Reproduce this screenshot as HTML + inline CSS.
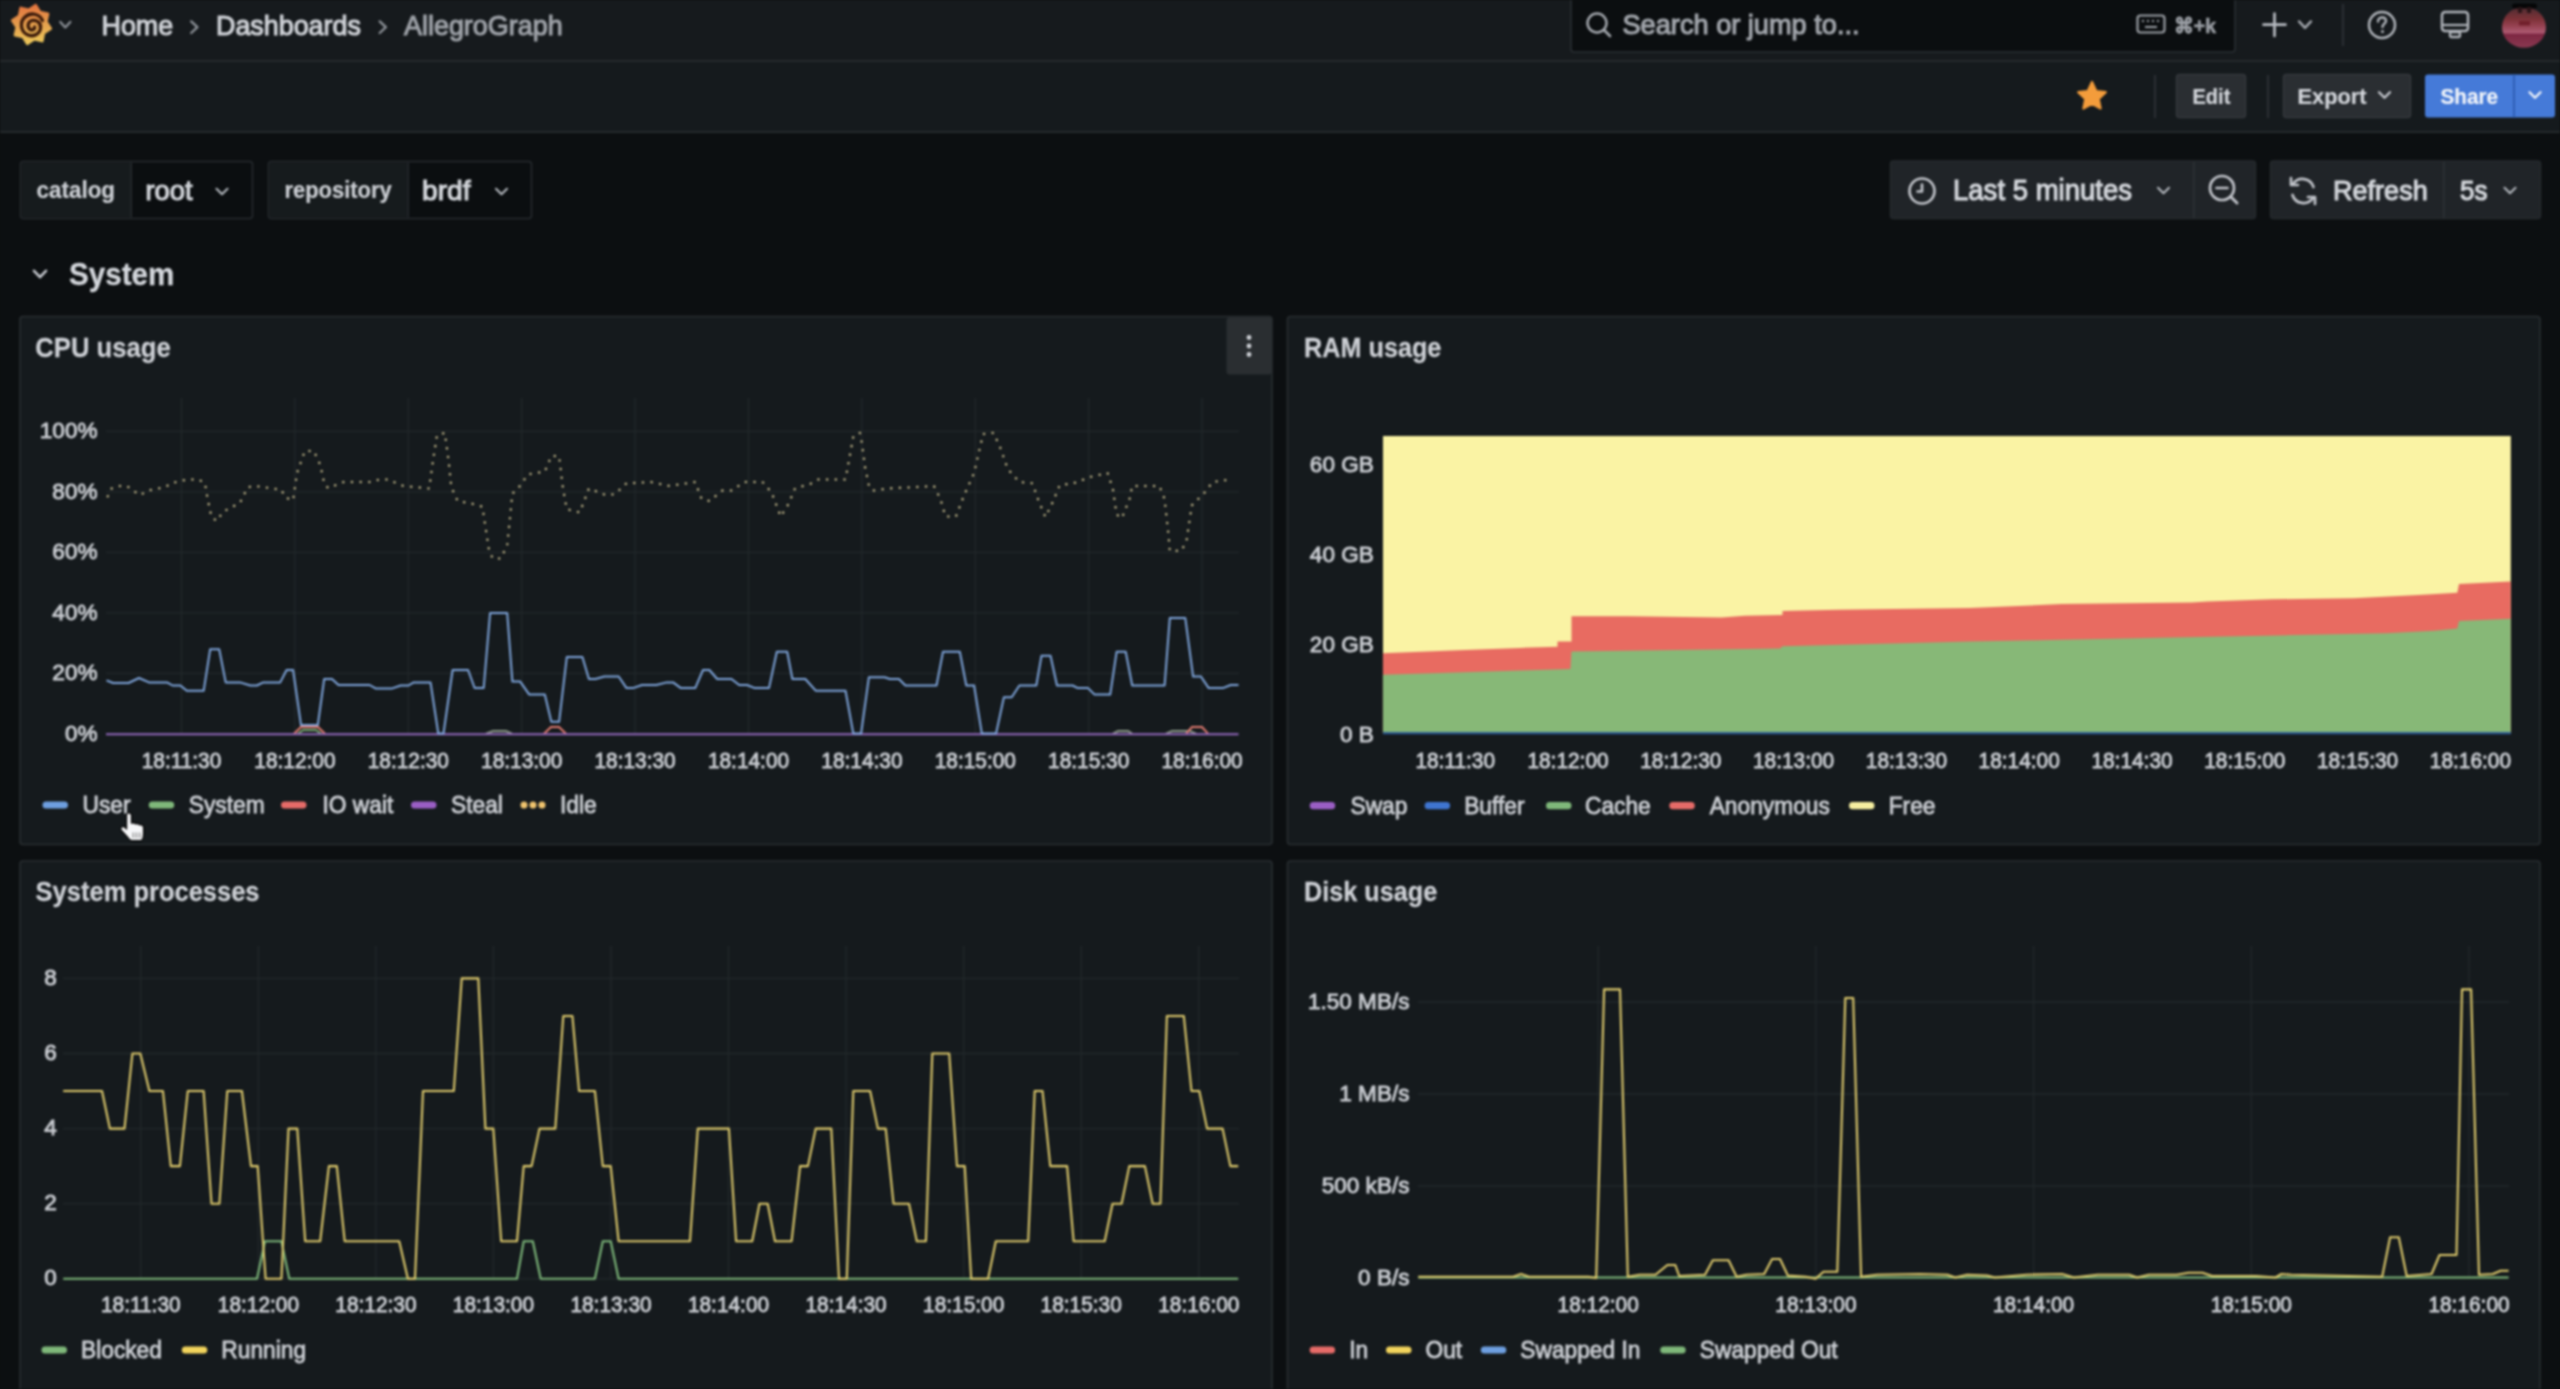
<!DOCTYPE html>
<html><head><meta charset="utf-8">
<style>
html,body{margin:0;padding:0;background:#0c0f11;}
body{width:2560px;height:1389px;overflow:hidden;position:relative;}
svg{position:absolute;left:0;top:0;display:block;filter:blur(0.9px);}
text{font-family:"Liberation Sans", sans-serif;}
</style></head>
<body>
<svg width="2560" height="1389" viewBox="0 0 2560 1389">
<rect x="0" y="0" width="2560" height="1389" fill="#0c0f11"/>
<rect x="0" y="0" width="2560" height="60" fill="#161a1d"/>
<rect x="0" y="60" width="2560" height="2" fill="#252a2d"/>
<rect x="0" y="62" width="2560" height="69" fill="#151a1d"/>
<rect x="0" y="131" width="2560" height="2" fill="#252a2d"/>
<g transform="translate(8.5 1.5)">
 <defs><linearGradient id="lg" x1="0.25" y1="0" x2="0.55" y2="1"><stop offset="0" stop-color="#e4703e"/><stop offset="0.5" stop-color="#e49c4c"/><stop offset="1" stop-color="#ecc85a"/></linearGradient></defs>
 <path d="M23.0,3.5 L28.7,9.3 L36.8,9.2 L36.7,17.3 L42.5,23.0 L36.7,28.7 L36.8,36.8 L28.7,36.7 L23.0,42.5 L17.3,36.7 L9.2,36.8 L9.3,28.7 L3.5,23.0 L9.3,17.3 L9.2,9.2 L17.3,9.3 Z" fill="url(#lg)" stroke="url(#lg)" stroke-width="3" stroke-linejoin="round" transform="rotate(12 23 23)"/>
 <path d="M34,19 C31,12 22,10.5 16.5,15.5 C11,20.5 12,29.5 18.5,33 C24,36 31,33 32,27 C33,21.5 28,18 23.5,19 C19.5,20 18.5,25 21,27.5 C23,29.5 26.5,28 26,25.5" fill="none" stroke="#3b1a0a" stroke-width="3.3" stroke-linecap="round"/>
</g>
<path d="M60.3,21.9 L65.3,27.4 L70.3,21.9" fill="none" stroke="#8a8f95" stroke-width="2.3" stroke-linecap="round" stroke-linejoin="round"/>
<text transform="translate(101.5 34.8) scale(0.96 1)" font-size="28" fill="#cdd0d5" text-anchor="start" font-weight="normal" stroke="#cdd0d5" stroke-width="1.15">Home</text>
<path d="M191.2,21.4 L197.4,27.2 L191.2,33.0" fill="none" stroke="#8e9399" stroke-width="2.3" stroke-linecap="round" stroke-linejoin="round"/>
<text transform="translate(216.0 34.8) scale(0.96 1)" font-size="28" fill="#cdd0d5" text-anchor="start" font-weight="normal" stroke="#cdd0d5" stroke-width="1.15">Dashboards</text>
<path d="M379.7,21.4 L385.9,27.2 L379.7,33.0" fill="none" stroke="#8e9399" stroke-width="2.3" stroke-linecap="round" stroke-linejoin="round"/>
<text transform="translate(404.0 34.6) scale(0.945 1)" font-size="28.5" fill="#9da1a7" text-anchor="start" font-weight="normal" stroke="#9da1a7" stroke-width="1.15">AllegroGraph</text>
<rect x="1571" y="-6" width="664" height="58" rx="3" fill="#0b0e10" stroke="#2a2f33" stroke-width="1.6"/>
<g transform="translate(1584 10)"><circle cx="13" cy="13" r="9.5" fill="none" stroke="#a3a7ad" stroke-width="2.5"/><path d="M20,20 L26,26" stroke="#a3a7ad" stroke-width="2.7" stroke-linecap="round"/></g>
<text transform="translate(1622.5 34.2) scale(0.985 1)" font-size="27.6" fill="#a0a4aa" text-anchor="start" font-weight="normal" stroke="#a0a4aa" stroke-width="1.15">Search or jump to...</text>
<g transform="translate(2136 14)"><rect x="1.5" y="1.5" width="27" height="17" rx="3" fill="none" stroke="#9a9ea4" stroke-width="2.2"/><path d="M6,7 h2 M11,7 h2 M16,7 h2 M21,7 h2 M9,13 h12" stroke="#9a9ea4" stroke-width="2"/></g>
<text transform="translate(2174.0 33.0) scale(0.95 1)" font-size="21" fill="#9a9ea4" text-anchor="start" font-weight="bold" stroke="#9a9ea4" stroke-width="0.5">&#8984;+k</text>
<path d="M2274.5,13.5 V36 M2263.5,24.7 H2285.5" stroke="#b7bbc1" stroke-width="2.7" stroke-linecap="round"/>
<path d="M2299.0,21.4 L2305.0,27.9 L2311.0,21.4" fill="none" stroke="#a3a7ad" stroke-width="2.4" stroke-linecap="round" stroke-linejoin="round"/>
<rect x="2342" y="4" width="2" height="42" rx="0" fill="#2b2f34"/>
<g transform="translate(2366 9)"><circle cx="16" cy="16" r="13" fill="none" stroke="#b1b5bb" stroke-width="2.5"/><path d="M12,12.5 C12,9.5 14,8.5 16,8.5 C18.5,8.5 20,10 20,12 C20,14.5 16.5,15 16.5,18" fill="none" stroke="#b1b5bb" stroke-width="2.4" stroke-linecap="round"/><circle cx="16.5" cy="22.5" r="1.5" fill="#b1b5bb"/></g>
<g transform="translate(2439 9)"><rect x="3" y="3" width="26" height="19" rx="3" fill="none" stroke="#b1b5bb" stroke-width="2.5"/><path d="M3,16 H29" stroke="#b1b5bb" stroke-width="2.2"/><rect x="11" y="23" width="10" height="5" rx="1.5" fill="none" stroke="#b1b5bb" stroke-width="2.3"/></g>
<defs><clipPath id="av"><ellipse cx="2524" cy="27.3" rx="22" ry="20.5"/></clipPath><linearGradient id="avg" x1="0" y1="0" x2="0" y2="1"><stop offset="0" stop-color="#4a2c31"/><stop offset="0.3" stop-color="#7c3238"/><stop offset="0.45" stop-color="#94404f"/><stop offset="0.62" stop-color="#ad5a72"/><stop offset="0.66" stop-color="#7d2742"/><stop offset="1" stop-color="#8a3a52"/></linearGradient></defs><g clip-path="url(#av)"><rect x="2500" y="6" width="48" height="43" fill="url(#avg)"/><rect x="2519" y="21" width="11" height="4.5" fill="#72202c"/></g><rect x="2512" y="3.5" width="25" height="5" rx="2.5" fill="#050607"/><rect x="2518" y="7" width="4" height="6" fill="#2a1518"/><rect x="2527" y="7" width="4" height="6" fill="#2a1518"/>
<path d="M2092,82 L2096.2,91 L2105.8,92.2 L2098.7,98.9 L2100.6,108.5 L2092,103.8 L2083.4,108.5 L2085.3,98.9 L2078.2,92.2 L2087.8,91 Z" fill="#f39c3b" stroke="#f39c3b" stroke-width="2.2" stroke-linejoin="round"/>
<rect x="2154" y="75" width="2" height="43" rx="0" fill="#2b2f34"/>
<rect x="2176.5" y="74.5" width="69" height="43" rx="3" fill="#2a2e32" stroke="#34383d" stroke-width="1.5"/>
<text transform="translate(2192.5 103.8) scale(0.92 1)" font-size="21.8" fill="#d3d6db" text-anchor="start" font-weight="bold" stroke="#d3d6db" stroke-width="0.2">Edit</text>
<rect x="2267" y="75" width="2" height="43" rx="0" fill="#2b2f34"/>
<rect x="2283.5" y="74.5" width="127" height="43" rx="3" fill="#2a2e32" stroke="#34383d" stroke-width="1.5"/>
<text transform="translate(2297.5 103.8) scale(1.0 1)" font-size="21.8" fill="#d3d6db" text-anchor="start" font-weight="bold" stroke="#d3d6db" stroke-width="0.2">Export</text>
<path d="M2379.0,92.2 L2384.5,97.8 L2390.0,92.2" fill="none" stroke="#c7cad0" stroke-width="2.3" stroke-linecap="round" stroke-linejoin="round"/>
<rect x="2425" y="74.5" width="130" height="43" rx="3" fill="#457ad8"/>
<rect x="2513" y="74.5" width="2" height="43" rx="0" fill="#2f5fb5"/>
<text transform="translate(2440.5 103.8) scale(0.95 1)" font-size="21.8" fill="#f2f5fa" text-anchor="start" font-weight="bold" stroke="#f2f5fa" stroke-width="0.2">Share</text>
<path d="M2529.5,92.2 L2535.0,97.8 L2540.5,92.2" fill="none" stroke="#f2f5fa" stroke-width="2.3" stroke-linecap="round" stroke-linejoin="round"/>
<rect x="20.5" y="161.5" width="232" height="57" rx="3" fill="#0b0e10" stroke="#272b2f" stroke-width="1.5"/>
<rect x="21.5" y="162.5" width="109.5" height="55" fill="#161b1d"/>
<rect x="130.5" y="162.5" width="1.5" height="55" fill="#272b2f"/>
<text transform="translate(36.5 198.3) scale(0.955 1)" font-size="23.5" fill="#cdd0d5" text-anchor="start" font-weight="bold" stroke="#cdd0d5" stroke-width="0.2">catalog</text>
<text transform="translate(145.5 200.0) scale(0.96 1)" font-size="28.5" fill="#d3d6db" text-anchor="start" font-weight="normal" stroke="#d3d6db" stroke-width="1.15">root</text>
<path d="M216.5,188.8 L222.0,194.2 L227.5,188.8" fill="none" stroke="#b0b4ba" stroke-width="2.2" stroke-linecap="round" stroke-linejoin="round"/>
<rect x="268.5" y="161.5" width="263" height="57" rx="3" fill="#0b0e10" stroke="#272b2f" stroke-width="1.5"/>
<rect x="269.5" y="162.5" width="138" height="55" fill="#161b1d"/>
<rect x="407.5" y="162.5" width="1.5" height="55" fill="#272b2f"/>
<text transform="translate(284.5 198.3) scale(0.945 1)" font-size="23.2" fill="#cdd0d5" text-anchor="start" font-weight="bold" stroke="#cdd0d5" stroke-width="0.2">repository</text>
<text transform="translate(422.0 200.0) scale(0.99 1)" font-size="28.5" fill="#d3d6db" text-anchor="start" font-weight="normal" stroke="#d3d6db" stroke-width="1.15">brdf</text>
<path d="M496.0,188.8 L501.5,194.2 L507.0,188.8" fill="none" stroke="#b0b4ba" stroke-width="2.2" stroke-linecap="round" stroke-linejoin="round"/>
<rect x="1890.5" y="161" width="365" height="57.5" rx="3" fill="#202428" stroke="#262a2e" stroke-width="1.5"/>
<rect x="2193" y="162" width="1.5" height="56" fill="#2d3236"/>
<g transform="translate(1906 175)"><circle cx="16" cy="16" r="12.5" fill="none" stroke="#c0c3c9" stroke-width="2.7"/><path d="M16,9.5 V16.5 H11.5" fill="none" stroke="#c0c3c9" stroke-width="2.7" stroke-linecap="round" stroke-linejoin="round"/></g>
<text transform="translate(1953.0 199.7) scale(0.95 1)" font-size="29" fill="#d3d6db" text-anchor="start" font-weight="normal" stroke="#d3d6db" stroke-width="1.15">Last 5 minutes</text>
<path d="M2158.0,187.8 L2163.5,193.2 L2169.0,187.8" fill="none" stroke="#b0b4ba" stroke-width="2.2" stroke-linecap="round" stroke-linejoin="round"/>
<g transform="translate(2206 173)"><circle cx="16" cy="15" r="12" fill="none" stroke="#c0c3c9" stroke-width="2.7"/><path d="M10.5,15 H21.5" stroke="#c0c3c9" stroke-width="2.7" stroke-linecap="round"/><path d="M24.5,23.5 L31,30" stroke="#c0c3c9" stroke-width="2.9" stroke-linecap="round"/></g>
<rect x="2270.5" y="161" width="270" height="57.5" rx="3" fill="#202428" stroke="#262a2e" stroke-width="1.5"/>
<rect x="2443" y="162" width="1.5" height="56" fill="#2d3236"/>
<g transform="translate(2286 174)"><path d="M27.5,13 A11.5,11.5 0 0 0 7,10" fill="none" stroke="#c0c3c9" stroke-width="2.7" stroke-linecap="round"/><path d="M6.5,21 A11.5,11.5 0 0 0 27,24" fill="none" stroke="#c0c3c9" stroke-width="2.7" stroke-linecap="round"/><path d="M5,4 V11 H12" fill="none" stroke="#c0c3c9" stroke-width="2.7" stroke-linecap="round" stroke-linejoin="round"/><path d="M29,30 V23 H22" fill="none" stroke="#c0c3c9" stroke-width="2.7" stroke-linecap="round" stroke-linejoin="round"/></g>
<text transform="translate(2333.0 199.7) scale(0.95 1)" font-size="28.5" fill="#d3d6db" text-anchor="start" font-weight="normal" stroke="#d3d6db" stroke-width="1.15">Refresh</text>
<text transform="translate(2460.0 199.7) scale(0.93 1)" font-size="28" fill="#d3d6db" text-anchor="start" font-weight="normal" stroke="#d3d6db" stroke-width="1.15">5s</text>
<path d="M2504.5,187.8 L2510.0,193.2 L2515.5,187.8" fill="none" stroke="#b0b4ba" stroke-width="2.2" stroke-linecap="round" stroke-linejoin="round"/>
<path d="M34.0,270.8 L40.0,277.2 L46.0,270.8" fill="none" stroke="#c5c8ce" stroke-width="2.6" stroke-linecap="round" stroke-linejoin="round"/>
<text transform="translate(69.0 284.5) scale(0.955 1)" font-size="31" fill="#d3d6db" text-anchor="start" font-weight="bold" stroke="#d3d6db" stroke-width="0.3">System</text>
<rect x="20" y="316.5" width="1252" height="528.0" rx="3" fill="#151a1d" stroke="#292e31" stroke-width="1.6"/>
<rect x="1287.5" y="316.5" width="1252.5" height="528.0" rx="3" fill="#151a1d" stroke="#292e31" stroke-width="1.6"/>
<rect x="20" y="861" width="1252" height="534" rx="3" fill="#151a1d" stroke="#292e31" stroke-width="1.6"/>
<rect x="1287.5" y="861" width="1252.5" height="534" rx="3" fill="#151a1d" stroke="#292e31" stroke-width="1.6"/>
<text transform="translate(35.3 356.8) scale(0.95 1)" font-size="27" fill="#cdd0d5" text-anchor="start" font-weight="bold" stroke="#cdd0d5" stroke-width="0.25">CPU usage</text>
<text transform="translate(1304.0 356.5) scale(0.935 1)" font-size="27" fill="#cdd0d5" text-anchor="start" font-weight="bold" stroke="#cdd0d5" stroke-width="0.25">RAM usage</text>
<text transform="translate(35.6 900.5) scale(0.945 1)" font-size="27" fill="#cdd0d5" text-anchor="start" font-weight="bold" stroke="#cdd0d5" stroke-width="0.25">System processes</text>
<text transform="translate(1304.0 900.5) scale(0.935 1)" font-size="27" fill="#cdd0d5" text-anchor="start" font-weight="bold" stroke="#cdd0d5" stroke-width="0.25">Disk usage</text>
<rect x="1226.5" y="317.5" width="45" height="57" rx="3" fill="#2a2e31"/>
<circle cx="1249" cy="337.5" r="2.4" fill="#cfd2d7"/>
<circle cx="1249" cy="346" r="2.4" fill="#cfd2d7"/>
<circle cx="1249" cy="354.5" r="2.4" fill="#cfd2d7"/>
<line x1="106" y1="733.8" x2="1239" y2="733.8" stroke="#22282b" stroke-width="1.3"/>
<line x1="106" y1="673.3" x2="1239" y2="673.3" stroke="#22282b" stroke-width="1.3"/>
<line x1="106" y1="612.8" x2="1239" y2="612.8" stroke="#22282b" stroke-width="1.3"/>
<line x1="106" y1="552.3" x2="1239" y2="552.3" stroke="#22282b" stroke-width="1.3"/>
<line x1="106" y1="491.8" x2="1239" y2="491.8" stroke="#22282b" stroke-width="1.3"/>
<line x1="106" y1="431.3" x2="1239" y2="431.3" stroke="#22282b" stroke-width="1.3"/>
<line x1="181.5" y1="398" x2="181.5" y2="734" stroke="#22282b" stroke-width="1.3"/>
<line x1="294.9" y1="398" x2="294.9" y2="734" stroke="#22282b" stroke-width="1.3"/>
<line x1="408.3" y1="398" x2="408.3" y2="734" stroke="#22282b" stroke-width="1.3"/>
<line x1="521.7" y1="398" x2="521.7" y2="734" stroke="#22282b" stroke-width="1.3"/>
<line x1="635.1" y1="398" x2="635.1" y2="734" stroke="#22282b" stroke-width="1.3"/>
<line x1="748.5" y1="398" x2="748.5" y2="734" stroke="#22282b" stroke-width="1.3"/>
<line x1="861.9" y1="398" x2="861.9" y2="734" stroke="#22282b" stroke-width="1.3"/>
<line x1="975.3" y1="398" x2="975.3" y2="734" stroke="#22282b" stroke-width="1.3"/>
<line x1="1088.7" y1="398" x2="1088.7" y2="734" stroke="#22282b" stroke-width="1.3"/>
<line x1="1202.1" y1="398" x2="1202.1" y2="734" stroke="#22282b" stroke-width="1.3"/>
<text transform="translate(97.5 740.5) scale(0.99 1)" font-size="22.8" fill="#c9ccd1" text-anchor="end" font-weight="normal" stroke="#c9ccd1" stroke-width="0.9">0%</text>
<text transform="translate(97.5 680.1) scale(0.99 1)" font-size="22.8" fill="#c9ccd1" text-anchor="end" font-weight="normal" stroke="#c9ccd1" stroke-width="0.9">20%</text>
<text transform="translate(97.5 619.6) scale(0.99 1)" font-size="22.8" fill="#c9ccd1" text-anchor="end" font-weight="normal" stroke="#c9ccd1" stroke-width="0.9">40%</text>
<text transform="translate(97.5 559.1) scale(0.99 1)" font-size="22.8" fill="#c9ccd1" text-anchor="end" font-weight="normal" stroke="#c9ccd1" stroke-width="0.9">60%</text>
<text transform="translate(97.5 498.6) scale(0.99 1)" font-size="22.8" fill="#c9ccd1" text-anchor="end" font-weight="normal" stroke="#c9ccd1" stroke-width="0.9">80%</text>
<text transform="translate(97.5 438.1) scale(0.99 1)" font-size="22.8" fill="#c9ccd1" text-anchor="end" font-weight="normal" stroke="#c9ccd1" stroke-width="0.9">100%</text>
<text transform="translate(181.5 767.6) scale(0.94 1)" font-size="22.2" fill="#c9ccd1" text-anchor="middle" font-weight="normal" stroke="#c9ccd1" stroke-width="0.9">18:11:30</text>
<text transform="translate(294.9 767.6) scale(0.94 1)" font-size="22.2" fill="#c9ccd1" text-anchor="middle" font-weight="normal" stroke="#c9ccd1" stroke-width="0.9">18:12:00</text>
<text transform="translate(408.3 767.6) scale(0.94 1)" font-size="22.2" fill="#c9ccd1" text-anchor="middle" font-weight="normal" stroke="#c9ccd1" stroke-width="0.9">18:12:30</text>
<text transform="translate(521.7 767.6) scale(0.94 1)" font-size="22.2" fill="#c9ccd1" text-anchor="middle" font-weight="normal" stroke="#c9ccd1" stroke-width="0.9">18:13:00</text>
<text transform="translate(635.1 767.6) scale(0.94 1)" font-size="22.2" fill="#c9ccd1" text-anchor="middle" font-weight="normal" stroke="#c9ccd1" stroke-width="0.9">18:13:30</text>
<text transform="translate(748.5 767.6) scale(0.94 1)" font-size="22.2" fill="#c9ccd1" text-anchor="middle" font-weight="normal" stroke="#c9ccd1" stroke-width="0.9">18:14:00</text>
<text transform="translate(861.9 767.6) scale(0.94 1)" font-size="22.2" fill="#c9ccd1" text-anchor="middle" font-weight="normal" stroke="#c9ccd1" stroke-width="0.9">18:14:30</text>
<text transform="translate(975.3 767.6) scale(0.94 1)" font-size="22.2" fill="#c9ccd1" text-anchor="middle" font-weight="normal" stroke="#c9ccd1" stroke-width="0.9">18:15:00</text>
<text transform="translate(1088.7 767.6) scale(0.94 1)" font-size="22.2" fill="#c9ccd1" text-anchor="middle" font-weight="normal" stroke="#c9ccd1" stroke-width="0.9">18:15:30</text>
<text transform="translate(1202.1 767.6) scale(0.94 1)" font-size="22.2" fill="#c9ccd1" text-anchor="middle" font-weight="normal" stroke="#c9ccd1" stroke-width="0.9">18:16:00</text>
<path d="M294,733.7 L301,727 L318,727 L325,733.7" fill="none" stroke="#e07a70" stroke-width="2.0"/>
<path d="M298,733.7 L303,730 L316,730 L321,733.7" fill="none" stroke="#7aa874" stroke-width="2"/>
<path d="M486,733.7 L493,731 L506,731 L512,733.7" fill="none" stroke="#8a9788" stroke-width="2.0"/>
<path d="M544,733.7 L551,727 L559,727 L566,733.7" fill="none" stroke="#e07a70" stroke-width="2.0"/>
<path d="M1113,733.7 L1118,731 L1128,731 L1132,733.7" fill="none" stroke="#8a9788" stroke-width="2.0"/>
<path d="M1166,733.7 L1172,731 L1190,731 L1196,733.7" fill="none" stroke="#8a9788" stroke-width="2.0"/>
<path d="M1186,733.7 L1192,727 L1202,727 L1208,733.7" fill="none" stroke="#e07a70" stroke-width="2.0"/>
<line x1="106" y1="734.2" x2="1238.5" y2="734.2" stroke="#9266bb" stroke-width="1.9"/>
<polyline points="107.8,496.3 111.7,488.5 118.0,486.0 127.0,486.0 133.7,491.0 140.2,495.0 148.0,490.6 164.8,487.2 172.6,482.8 188.0,479.4 198.5,479.4 205.0,483.3 207.6,498.9 211.5,517.0 216.7,521.0 223.0,511.8 240.0,502.8 247.8,487.2 255.5,486.0 281.5,489.8 285.4,497.6 293.1,500.2 297.0,473.0 304.8,451.0 313.9,451.0 320.4,465.2 324.2,483.3 328.1,488.0 343.7,482.0 369.6,482.0 380.0,479.4 387.8,479.4 403.3,486.0 429.2,488.5 433.1,460.0 437.0,435.4 444.8,432.8 448.7,461.3 451.3,487.2 457.7,501.0 473.3,504.0 482.4,506.7 488.9,549.4 492.7,558.5 500.7,558.5 507.2,545.5 512.4,493.7 518.9,487.2 528.0,474.3 544.8,471.7 551.3,456.1 559.1,456.1 563.0,488.5 566.8,509.2 579.8,512.4 588.9,488.5 605.7,495.0 614.8,494.2 626.5,483.3 651.1,482.0 669.2,485.9 695.2,482.0 701.6,498.9 709.4,501.0 722.4,490.6 731.5,490.6 744.4,482.0 762.6,482.0 771.6,492.4 780.7,516.5 788.5,504.0 795.0,488.5 811.8,483.3 818.3,479.4 845.5,479.4 853.3,436.7 859.8,432.8 861.3,439.3 865.2,467.8 869.0,486.0 873.0,490.6 888.5,488.5 933.9,486.0 940.4,498.9 945.5,516.5 955.9,516.5 963.7,496.3 974.1,473.0 983.1,434.0 993.5,432.8 1000.0,447.0 1007.8,469.0 1019.4,482.0 1032.4,483.3 1038.9,501.5 1045.4,517.0 1053.1,501.5 1059.6,485.4 1075.2,482.8 1090.7,476.8 1107.6,473.0 1112.8,488.5 1116.6,514.4 1121.8,518.3 1129.6,498.9 1132.2,486.0 1159.4,486.0 1164.6,498.9 1168.5,535.2 1169.8,550.7 1181.5,550.7 1186.6,540.4 1191.8,505.4 1204.8,492.4 1212.6,482.0 1230.7,479.4" fill="none" stroke="#bdb388" stroke-width="2.5" stroke-dasharray="0.1 8.6" stroke-linecap="round" stroke-linejoin="round"/>
<polyline points="106.5,680.3 113.0,683.0 128.5,683.0 139.0,678.0 149.0,682.4 167.0,682.4 172.6,685.5 180.4,685.5 186.8,690.7 203.7,690.7 210.2,649.2 219.2,649.2 225.7,682.4 240.0,682.4 250.4,685.5 256.8,685.5 263.3,682.4 280.2,682.4 286.6,670.0 293.1,670.0 301.0,725.0 317.8,725.0 324.2,679.0 332.0,679.0 338.5,685.0 369.6,685.0 376.0,688.6 391.6,688.6 400.7,685.5 408.5,685.5 413.7,682.4 430.5,682.4 438.3,733.5 443.5,733.5 452.6,670.0 468.1,670.0 474.6,688.0 483.7,688.0 490.1,613.0 507.2,613.0 512.4,681.6 520.2,681.6 529.3,694.6 544.8,694.6 551.3,721.8 559.1,721.8 566.8,657.0 582.4,657.0 588.9,679.0 595.4,679.0 604.4,676.5 618.7,676.5 626.5,688.1 633.0,688.1 642.0,685.0 656.3,685.0 666.6,682.4 673.1,682.4 680.9,688.1 695.2,688.1 703.0,670.0 709.4,670.0 717.2,679.0 731.5,679.0 739.2,685.0 747.0,685.0 754.8,688.1 769.0,688.1 776.8,651.8 787.2,651.8 792.4,679.0 805.3,679.0 815.7,690.7 845.5,690.7 853.3,733.5 861.1,733.5 868.9,677.2 884.6,677.2 889.8,679.0 898.9,679.0 905.4,685.5 936.5,685.5 943.0,651.8 959.8,651.8 966.3,685.5 974.1,685.5 981.8,733.5 996.1,733.5 1003.9,697.2 1011.7,697.2 1019.4,685.5 1036.3,685.5 1041.5,655.7 1050.5,655.7 1057.0,685.5 1072.6,685.5 1077.8,688.1 1088.1,688.1 1094.6,694.6 1110.2,694.6 1116.6,651.8 1125.7,651.8 1132.2,685.5 1164.6,685.5 1169.8,618.1 1185.3,618.1 1193.1,676.5 1200.9,676.5 1208.7,688.1 1222.9,688.1 1230.7,685.0 1238.5,685.0" fill="none" stroke="#7fa5db" stroke-width="2.0" stroke-linejoin="round"/>
<rect x="42.5" y="801.4" width="25.5" height="7.2" rx="3.6" fill="#6e9fe0"/>
<text transform="translate(82.5 813.2) scale(0.925 1)" font-size="24.6" fill="#c9ccd1" text-anchor="start" font-weight="normal" stroke="#c9ccd1" stroke-width="0.9">User</text>
<rect x="148.75" y="801.4" width="25.5" height="7.2" rx="3.6" fill="#7fb87a"/>
<text transform="translate(188.8 813.2) scale(0.925 1)" font-size="24.6" fill="#c9ccd1" text-anchor="start" font-weight="normal" stroke="#c9ccd1" stroke-width="0.9">System</text>
<rect x="281" y="801.4" width="25.5" height="7.2" rx="3.6" fill="#e66b68"/>
<text transform="translate(322.5 813.2) scale(0.925 1)" font-size="24.6" fill="#c9ccd1" text-anchor="start" font-weight="normal" stroke="#c9ccd1" stroke-width="0.9">IO wait</text>
<rect x="411" y="801.4" width="25.5" height="7.2" rx="3.6" fill="#9a5ec4"/>
<text transform="translate(451.0 813.2) scale(0.925 1)" font-size="24.6" fill="#c9ccd1" text-anchor="start" font-weight="normal" stroke="#c9ccd1" stroke-width="0.9">Steal</text>
<circle cx="524" cy="805" r="3.5" fill="#f0c46e"/>
<circle cx="533" cy="805" r="3.5" fill="#f0c46e"/>
<circle cx="542" cy="805" r="3.5" fill="#f0c46e"/>
<text transform="translate(560.0 813.2) scale(0.925 1)" font-size="24.6" fill="#c9ccd1" text-anchor="start" font-weight="normal" stroke="#c9ccd1" stroke-width="0.9">Idle</text>
<rect x="1383" y="436" width="1127.8" height="297.5" fill="#faf3a4"/>
<polygon points="1382.9,653.3 1459.0,650.2 1520.0,647.9 1557.5,646.7 1557.5,641.6 1571.5,641.6 1571.5,616.2 1627.8,616.2 1721.5,617.4 1745.0,615.8 1782.5,615.1 1782.5,611.1 1838.7,609.7 1970.0,608.0 2062.0,604.1 2191.6,602.5 2207.8,601.5 2272.6,599.3 2353.6,598.3 2418.5,595.0 2457.3,592.8 2459.0,584.0 2510.8,581.5 2510.8,733.5 1382.9,733.5" fill="#e86b61"/>
<polygon points="1382.9,674.8 1570.4,669.0 1571.5,651.4 1780.0,648.6 1782.5,646.2 1970.0,641.6 2062.0,639.8 2224.0,636.5 2386.0,633.3 2434.6,630.7 2457.3,628.4 2459.0,621.0 2510.8,618.7 2510.8,733.5 1382.9,733.5" fill="#87b877"/>
<line x1="1383" y1="733.2" x2="2510.8" y2="733.2" stroke="#2c5a90" stroke-width="2.2"/>
<text transform="translate(1373.8 741.5) scale(0.99 1)" font-size="22.8" fill="#c9ccd1" text-anchor="end" font-weight="normal" stroke="#c9ccd1" stroke-width="0.9">0 B</text>
<text transform="translate(1373.8 651.8) scale(0.99 1)" font-size="22.8" fill="#c9ccd1" text-anchor="end" font-weight="normal" stroke="#c9ccd1" stroke-width="0.9">20 GB</text>
<text transform="translate(1373.8 562.1) scale(0.99 1)" font-size="22.8" fill="#c9ccd1" text-anchor="end" font-weight="normal" stroke="#c9ccd1" stroke-width="0.9">40 GB</text>
<text transform="translate(1373.8 472.4) scale(0.99 1)" font-size="22.8" fill="#c9ccd1" text-anchor="end" font-weight="normal" stroke="#c9ccd1" stroke-width="0.9">60 GB</text>
<text transform="translate(1455.2 767.6) scale(0.94 1)" font-size="22.2" fill="#c9ccd1" text-anchor="middle" font-weight="normal" stroke="#c9ccd1" stroke-width="0.9">18:11:30</text>
<text transform="translate(1568.0 767.6) scale(0.94 1)" font-size="22.2" fill="#c9ccd1" text-anchor="middle" font-weight="normal" stroke="#c9ccd1" stroke-width="0.9">18:12:00</text>
<text transform="translate(1680.8 767.6) scale(0.94 1)" font-size="22.2" fill="#c9ccd1" text-anchor="middle" font-weight="normal" stroke="#c9ccd1" stroke-width="0.9">18:12:30</text>
<text transform="translate(1793.6 767.6) scale(0.94 1)" font-size="22.2" fill="#c9ccd1" text-anchor="middle" font-weight="normal" stroke="#c9ccd1" stroke-width="0.9">18:13:00</text>
<text transform="translate(1906.4 767.6) scale(0.94 1)" font-size="22.2" fill="#c9ccd1" text-anchor="middle" font-weight="normal" stroke="#c9ccd1" stroke-width="0.9">18:13:30</text>
<text transform="translate(2019.2 767.6) scale(0.94 1)" font-size="22.2" fill="#c9ccd1" text-anchor="middle" font-weight="normal" stroke="#c9ccd1" stroke-width="0.9">18:14:00</text>
<text transform="translate(2132.0 767.6) scale(0.94 1)" font-size="22.2" fill="#c9ccd1" text-anchor="middle" font-weight="normal" stroke="#c9ccd1" stroke-width="0.9">18:14:30</text>
<text transform="translate(2244.8 767.6) scale(0.94 1)" font-size="22.2" fill="#c9ccd1" text-anchor="middle" font-weight="normal" stroke="#c9ccd1" stroke-width="0.9">18:15:00</text>
<text transform="translate(2357.6 767.6) scale(0.94 1)" font-size="22.2" fill="#c9ccd1" text-anchor="middle" font-weight="normal" stroke="#c9ccd1" stroke-width="0.9">18:15:30</text>
<text transform="translate(2470.4 767.6) scale(0.94 1)" font-size="22.2" fill="#c9ccd1" text-anchor="middle" font-weight="normal" stroke="#c9ccd1" stroke-width="0.9">18:16:00</text>
<rect x="1309.7" y="802.1" width="25.5" height="7.2" rx="3.6" fill="#9a5ec4"/>
<text transform="translate(1350.5 813.9) scale(0.925 1)" font-size="24.6" fill="#c9ccd1" text-anchor="start" font-weight="normal" stroke="#c9ccd1" stroke-width="0.9">Swap</text>
<rect x="1424.6" y="802.1" width="25.5" height="7.2" rx="3.6" fill="#3f75d0"/>
<text transform="translate(1464.2 813.9) scale(0.925 1)" font-size="24.6" fill="#c9ccd1" text-anchor="start" font-weight="normal" stroke="#c9ccd1" stroke-width="0.9">Buffer</text>
<rect x="1546" y="802.1" width="25.5" height="7.2" rx="3.6" fill="#7fb87a"/>
<text transform="translate(1585.0 813.9) scale(0.925 1)" font-size="24.6" fill="#c9ccd1" text-anchor="start" font-weight="normal" stroke="#c9ccd1" stroke-width="0.9">Cache</text>
<rect x="1669.3" y="802.1" width="25.5" height="7.2" rx="3.6" fill="#e66b68"/>
<text transform="translate(1709.7 813.9) scale(0.925 1)" font-size="24.6" fill="#c9ccd1" text-anchor="start" font-weight="normal" stroke="#c9ccd1" stroke-width="0.9">Anonymous</text>
<rect x="1849" y="802.1" width="25.5" height="7.2" rx="3.6" fill="#f5eea0"/>
<text transform="translate(1888.7 813.9) scale(0.925 1)" font-size="24.6" fill="#c9ccd1" text-anchor="start" font-weight="normal" stroke="#c9ccd1" stroke-width="0.9">Free</text>
<line x1="63" y1="1278.8" x2="1239" y2="1278.8" stroke="#22282b" stroke-width="1.3"/>
<line x1="63" y1="1203.7" x2="1239" y2="1203.7" stroke="#22282b" stroke-width="1.3"/>
<line x1="63" y1="1128.6" x2="1239" y2="1128.6" stroke="#22282b" stroke-width="1.3"/>
<line x1="63" y1="1053.5" x2="1239" y2="1053.5" stroke="#22282b" stroke-width="1.3"/>
<line x1="63" y1="978.4" x2="1239" y2="978.4" stroke="#22282b" stroke-width="1.3"/>
<line x1="140.8" y1="946" x2="140.8" y2="1279" stroke="#22282b" stroke-width="1.3"/>
<line x1="258.4" y1="946" x2="258.4" y2="1279" stroke="#22282b" stroke-width="1.3"/>
<line x1="375.9" y1="946" x2="375.9" y2="1279" stroke="#22282b" stroke-width="1.3"/>
<line x1="493.4" y1="946" x2="493.4" y2="1279" stroke="#22282b" stroke-width="1.3"/>
<line x1="611.0" y1="946" x2="611.0" y2="1279" stroke="#22282b" stroke-width="1.3"/>
<line x1="728.5" y1="946" x2="728.5" y2="1279" stroke="#22282b" stroke-width="1.3"/>
<line x1="846.1" y1="946" x2="846.1" y2="1279" stroke="#22282b" stroke-width="1.3"/>
<line x1="963.7" y1="946" x2="963.7" y2="1279" stroke="#22282b" stroke-width="1.3"/>
<line x1="1081.2" y1="946" x2="1081.2" y2="1279" stroke="#22282b" stroke-width="1.3"/>
<line x1="1198.8" y1="946" x2="1198.8" y2="1279" stroke="#22282b" stroke-width="1.3"/>
<text transform="translate(56.8 1285.4) scale(0.99 1)" font-size="22.8" fill="#c9ccd1" text-anchor="end" font-weight="normal" stroke="#c9ccd1" stroke-width="0.9">0</text>
<text transform="translate(56.8 1210.3) scale(0.99 1)" font-size="22.8" fill="#c9ccd1" text-anchor="end" font-weight="normal" stroke="#c9ccd1" stroke-width="0.9">2</text>
<text transform="translate(56.8 1135.2) scale(0.99 1)" font-size="22.8" fill="#c9ccd1" text-anchor="end" font-weight="normal" stroke="#c9ccd1" stroke-width="0.9">4</text>
<text transform="translate(56.8 1060.1) scale(0.99 1)" font-size="22.8" fill="#c9ccd1" text-anchor="end" font-weight="normal" stroke="#c9ccd1" stroke-width="0.9">6</text>
<text transform="translate(56.8 985.0) scale(0.99 1)" font-size="22.8" fill="#c9ccd1" text-anchor="end" font-weight="normal" stroke="#c9ccd1" stroke-width="0.9">8</text>
<text transform="translate(140.8 1312.3) scale(0.94 1)" font-size="22.2" fill="#c9ccd1" text-anchor="middle" font-weight="normal" stroke="#c9ccd1" stroke-width="0.9">18:11:30</text>
<text transform="translate(258.4 1312.3) scale(0.94 1)" font-size="22.2" fill="#c9ccd1" text-anchor="middle" font-weight="normal" stroke="#c9ccd1" stroke-width="0.9">18:12:00</text>
<text transform="translate(375.9 1312.3) scale(0.94 1)" font-size="22.2" fill="#c9ccd1" text-anchor="middle" font-weight="normal" stroke="#c9ccd1" stroke-width="0.9">18:12:30</text>
<text transform="translate(493.4 1312.3) scale(0.94 1)" font-size="22.2" fill="#c9ccd1" text-anchor="middle" font-weight="normal" stroke="#c9ccd1" stroke-width="0.9">18:13:00</text>
<text transform="translate(611.0 1312.3) scale(0.94 1)" font-size="22.2" fill="#c9ccd1" text-anchor="middle" font-weight="normal" stroke="#c9ccd1" stroke-width="0.9">18:13:30</text>
<text transform="translate(728.5 1312.3) scale(0.94 1)" font-size="22.2" fill="#c9ccd1" text-anchor="middle" font-weight="normal" stroke="#c9ccd1" stroke-width="0.9">18:14:00</text>
<text transform="translate(846.1 1312.3) scale(0.94 1)" font-size="22.2" fill="#c9ccd1" text-anchor="middle" font-weight="normal" stroke="#c9ccd1" stroke-width="0.9">18:14:30</text>
<text transform="translate(963.7 1312.3) scale(0.94 1)" font-size="22.2" fill="#c9ccd1" text-anchor="middle" font-weight="normal" stroke="#c9ccd1" stroke-width="0.9">18:15:00</text>
<text transform="translate(1081.2 1312.3) scale(0.94 1)" font-size="22.2" fill="#c9ccd1" text-anchor="middle" font-weight="normal" stroke="#c9ccd1" stroke-width="0.9">18:15:30</text>
<text transform="translate(1198.8 1312.3) scale(0.94 1)" font-size="22.2" fill="#c9ccd1" text-anchor="middle" font-weight="normal" stroke="#c9ccd1" stroke-width="0.9">18:16:00</text>
<polyline points="63.2,1278.8 257.0,1278.8 265.0,1241.2 281.4,1241.2 289.3,1278.8 517.0,1278.8 523.7,1241.2 532.8,1241.2 540.7,1278.8 594.9,1278.8 602.8,1241.2 610.7,1241.2 618.6,1278.8 1238.2,1278.8" fill="none" stroke="#7db77a" stroke-width="2.1" stroke-linejoin="round"/>
<polyline points="63.2,1091.0 102.0,1091.0 109.9,1128.6 124.5,1128.6 132.4,1053.5 140.3,1053.5 149.4,1091.0 162.9,1091.0 170.8,1166.1 179.9,1166.1 187.8,1091.0 203.6,1091.0 211.5,1203.7 219.4,1203.7 227.3,1091.0 241.9,1091.0 251.0,1166.1 257.7,1166.1 265.6,1278.8 281.4,1278.8 288.5,1128.6 297.3,1128.6 305.2,1241.2 320.2,1241.2 328.9,1166.1 336.8,1166.1 344.7,1241.2 399.2,1241.2 407.9,1278.8 415.0,1278.8 423.0,1091.0 453.8,1091.0 461.7,978.4 478.3,978.4 485.4,1128.6 493.3,1128.6 501.2,1241.2 517.0,1241.2 523.7,1166.1 531.6,1166.1 539.5,1128.6 555.3,1128.6 563.3,1016.0 572.4,1016.0 579.1,1091.0 594.9,1091.0 602.8,1166.1 610.7,1166.1 618.6,1241.2 690.0,1241.2 697.8,1128.6 728.9,1128.6 736.1,1241.2 752.2,1241.2 759.5,1203.7 767.7,1203.7 775.0,1241.2 791.6,1241.2 800.1,1166.1 807.9,1166.1 815.7,1128.6 831.3,1128.6 839.0,1278.8 846.8,1278.8 853.3,1091.0 870.1,1091.0 877.9,1128.6 885.7,1128.6 893.5,1203.7 909.0,1203.7 916.8,1241.2 925.9,1241.2 932.3,1053.5 949.2,1053.5 957.0,1166.1 964.7,1166.1 971.2,1278.8 988.1,1278.8 995.8,1241.2 1028.2,1241.2 1034.7,1091.0 1042.5,1091.0 1050.3,1166.1 1067.1,1166.1 1073.6,1241.2 1104.7,1241.2 1112.5,1203.7 1121.6,1203.7 1129.3,1166.1 1144.9,1166.1 1152.7,1203.7 1160.4,1203.7 1166.9,1016.0 1183.8,1016.0 1191.5,1091.0 1199.3,1091.0 1207.1,1128.6 1222.6,1128.6 1230.4,1166.1 1238.2,1166.1" fill="none" stroke="#ddc96c" stroke-width="2.1" stroke-linejoin="round"/>
<rect x="41.5" y="1346.4" width="25.5" height="7.2" rx="3.6" fill="#7fb87a"/>
<text transform="translate(81.0 1358.2) scale(0.925 1)" font-size="24.6" fill="#c9ccd1" text-anchor="start" font-weight="normal" stroke="#c9ccd1" stroke-width="0.9">Blocked</text>
<rect x="181.8" y="1346.4" width="25.5" height="7.2" rx="3.6" fill="#f2d45c"/>
<text transform="translate(221.3 1358.2) scale(0.925 1)" font-size="24.6" fill="#c9ccd1" text-anchor="start" font-weight="normal" stroke="#c9ccd1" stroke-width="0.9">Running</text>
<line x1="1418" y1="1278.0" x2="2509" y2="1278.0" stroke="#22282b" stroke-width="1.3"/>
<line x1="1418" y1="1186.0" x2="2509" y2="1186.0" stroke="#22282b" stroke-width="1.3"/>
<line x1="1418" y1="1094.0" x2="2509" y2="1094.0" stroke="#22282b" stroke-width="1.3"/>
<line x1="1418" y1="1002.0" x2="2509" y2="1002.0" stroke="#22282b" stroke-width="1.3"/>
<line x1="1598.2" y1="946" x2="1598.2" y2="1278" stroke="#22282b" stroke-width="1.3"/>
<line x1="1815.9" y1="946" x2="1815.9" y2="1278" stroke="#22282b" stroke-width="1.3"/>
<line x1="2033.6" y1="946" x2="2033.6" y2="1278" stroke="#22282b" stroke-width="1.3"/>
<line x1="2251.3" y1="946" x2="2251.3" y2="1278" stroke="#22282b" stroke-width="1.3"/>
<line x1="2469.0" y1="946" x2="2469.0" y2="1278" stroke="#22282b" stroke-width="1.3"/>
<text transform="translate(1409.5 1285.4) scale(0.99 1)" font-size="22.8" fill="#c9ccd1" text-anchor="end" font-weight="normal" stroke="#c9ccd1" stroke-width="0.9">0 B/s</text>
<text transform="translate(1409.5 1193.4) scale(0.99 1)" font-size="22.8" fill="#c9ccd1" text-anchor="end" font-weight="normal" stroke="#c9ccd1" stroke-width="0.9">500 kB/s</text>
<text transform="translate(1409.5 1101.4) scale(0.99 1)" font-size="22.8" fill="#c9ccd1" text-anchor="end" font-weight="normal" stroke="#c9ccd1" stroke-width="0.9">1 MB/s</text>
<text transform="translate(1409.5 1009.4) scale(0.99 1)" font-size="22.8" fill="#c9ccd1" text-anchor="end" font-weight="normal" stroke="#c9ccd1" stroke-width="0.9">1.50 MB/s</text>
<text transform="translate(1598.2 1312.3) scale(0.94 1)" font-size="22.2" fill="#c9ccd1" text-anchor="middle" font-weight="normal" stroke="#c9ccd1" stroke-width="0.9">18:12:00</text>
<text transform="translate(1815.9 1312.3) scale(0.94 1)" font-size="22.2" fill="#c9ccd1" text-anchor="middle" font-weight="normal" stroke="#c9ccd1" stroke-width="0.9">18:13:00</text>
<text transform="translate(2033.6 1312.3) scale(0.94 1)" font-size="22.2" fill="#c9ccd1" text-anchor="middle" font-weight="normal" stroke="#c9ccd1" stroke-width="0.9">18:14:00</text>
<text transform="translate(2251.3 1312.3) scale(0.94 1)" font-size="22.2" fill="#c9ccd1" text-anchor="middle" font-weight="normal" stroke="#c9ccd1" stroke-width="0.9">18:15:00</text>
<text transform="translate(2469.0 1312.3) scale(0.94 1)" font-size="22.2" fill="#c9ccd1" text-anchor="middle" font-weight="normal" stroke="#c9ccd1" stroke-width="0.9">18:16:00</text>
<line x1="1418.3" y1="1277.5" x2="2508.6" y2="1277.5" stroke="#7db77a" stroke-width="2.0"/>
<polyline points="1418.3,1276.8 1513.2,1276.8 1521.1,1274.0 1529.0,1276.8 1588.3,1276.8 1596.2,1278.0 1604.1,989.4 1620.0,989.4 1627.8,1276.8 1639.7,1274.8 1655.5,1274.8 1667.4,1265.0 1675.3,1265.0 1679.2,1276.0 1705.0,1274.8 1712.8,1260.2 1728.6,1260.2 1736.6,1276.8 1746.4,1274.8 1764.2,1274.0 1772.1,1259.0 1780.0,1259.0 1787.9,1275.6 1805.7,1276.8 1815.6,1278.8 1823.5,1271.7 1837.3,1271.7 1845.3,998.0 1853.2,998.0 1861.1,1276.8 1876.9,1274.8 1920.0,1274.0 1947.4,1274.7 1955.3,1277.5 1967.2,1274.7 1987.0,1275.5 1994.9,1277.5 2026.5,1274.7 2062.0,1274.0 2073.9,1277.5 2097.6,1274.7 2129.2,1274.7 2137.1,1277.5 2149.0,1274.7 2176.7,1274.7 2188.5,1272.8 2202.4,1272.8 2212.2,1276.0 2255.7,1276.0 2275.5,1277.5 2281.4,1274.0 2291.3,1274.7 2382.2,1276.7 2390.1,1237.2 2398.8,1237.2 2406.7,1276.0 2431.6,1274.0 2439.5,1255.0 2456.5,1255.0 2462.0,989.4 2471.1,989.4 2479.0,1274.7 2492.8,1274.0 2500.7,1270.8 2508.6,1270.8" fill="none" stroke="#ddc96c" stroke-width="2.1" stroke-linejoin="round"/>
<rect x="1309.6" y="1346.4" width="25.5" height="7.2" rx="3.6" fill="#e66b68"/>
<text transform="translate(1349.2 1358.2) scale(0.925 1)" font-size="24.6" fill="#c9ccd1" text-anchor="start" font-weight="normal" stroke="#c9ccd1" stroke-width="0.9">In</text>
<rect x="1386" y="1346.4" width="25.5" height="7.2" rx="3.6" fill="#f2d45c"/>
<text transform="translate(1425.5 1358.2) scale(0.925 1)" font-size="24.6" fill="#c9ccd1" text-anchor="start" font-weight="normal" stroke="#c9ccd1" stroke-width="0.9">Out</text>
<rect x="1480.8" y="1346.4" width="25.5" height="7.2" rx="3.6" fill="#6e9fe0"/>
<text transform="translate(1520.3 1358.2) scale(0.925 1)" font-size="24.6" fill="#c9ccd1" text-anchor="start" font-weight="normal" stroke="#c9ccd1" stroke-width="0.9">Swapped In</text>
<rect x="1660.2" y="1346.4" width="25.5" height="7.2" rx="3.6" fill="#7fb87a"/>
<text transform="translate(1699.8 1358.2) scale(0.925 1)" font-size="24.6" fill="#c9ccd1" text-anchor="start" font-weight="normal" stroke="#c9ccd1" stroke-width="0.9">Swapped Out</text>
<g transform="translate(119 812)"><path d="M7.5,3.2 Q7.5,0.8 10,0.8 Q12.5,0.8 12.5,3.2 L12.5,11.2 Q14.8,10 16.6,11.8 Q18.8,10.8 20.6,12.8 Q23,12.2 24.6,14.6 L24.6,22 Q24.6,26.5 22.5,28.6 L12.5,28.6 Q10.5,28 9.2,26 L2.2,18.2 Q0.8,16.2 2.8,15 Q5,14 6.6,15.8 L7.5,17 Z" fill="#f6f7f9" stroke="#050505" stroke-width="1.3" stroke-linejoin="round"/><path d="M14.2,20.5 V26 M17.4,20.5 V26 M20.6,20.5 V26" stroke="#777" stroke-width="1.1"/></g>
</svg>
</body></html>
